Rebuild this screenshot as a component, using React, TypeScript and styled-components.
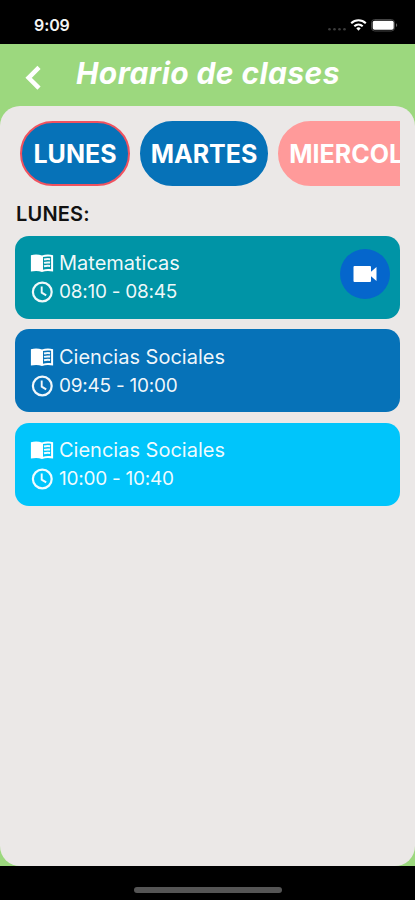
import React from 'react';
import styled, { createGlobalStyle } from 'styled-components';

const GlobalStyle = createGlobalStyle`
  *, *::before, *::after { box-sizing: border-box; }
  body { margin: 0; background: #000; font-family: Inter, 'Liberation Sans', sans-serif; }
`;

const Screen = styled.div`
  display: flex;
  flex-direction: column;
  width: 415px;
  height: 900px;
  overflow: hidden;
  background: #000;
`;

const StatusBar = styled.div`
  display: flex;
  flex: none;
  justify-content: space-between;
  height: 44px;
  padding: 15px 17px 0 34px;
  color: #f4f4f4;
`;

const Clock = styled.span`
  font-size: 16px;
  line-height: 21px;
  font-weight: 600;
  letter-spacing: -0.1px;
`;

const StatusIcons = styled.svg`
  display: block;
  width: 72px;
  height: 20px;
  margin-top: 1px;
`;

const AppBody = styled.div`
  display: flex;
  flex: none;
  flex-direction: column;
  height: 822px;
  background: #9cd87e;
`;

const Header = styled.header`
  display: flex;
  flex: none;
  height: 62px;
  padding-left: 24px;
`;

const BackButton = styled.button`
  display: block;
  width: 20px;
  height: 28px;
  margin: 20px 0 0;
  padding: 0;
  border: 0;
  background: none;
`;

const Title = styled.h1`
  margin: 11px 0 0 32px;
  color: #fff;
  font-size: 30px;
  line-height: 36px;
  font-weight: 700;
  font-style: italic;
  letter-spacing: 0.4px;
  white-space: nowrap;
`;

const Panel = styled.main`
  flex: 1;
  padding: 15px 15px 0;
  border-radius: 20px;
  background: #ebe8e7;
`;

const DayTabs = styled.nav`
  display: flex;
  gap: 10px;
  padding-left: 5px;
  overflow: hidden;
`;

const DayTab = styled.button<{ $color: string; $width: number; $selected?: boolean }>`
  flex: none;
  width: ${({ $width }) => $width}px;
  height: 65px;
  padding: 0;
  border: 2px solid ${({ $selected, $color }) => ($selected ? '#f0525f' : $color)};
  border-radius: 33px;
  background: ${({ $color }) => $color};
  color: #fff;
  font-family: inherit;
  font-size: 25px;
  font-weight: 700;
  line-height: 62px;
  white-space: nowrap;
`;

const DayHeading = styled.h2`
  margin: 15px 0 9px 1px;
  color: #111;
  font-size: 20px;
  line-height: 26px;
  font-weight: 600;
  letter-spacing: 0.2px;
`;

const LessonList = styled.div`
  display: flex;
  flex-direction: column;
  gap: 10.4px;
`;

const LessonCard = styled.article<{ $color: string }>`
  display: flex;
  justify-content: space-between;
  height: 83px;
  padding: 13.2px 10px 0 15px;
  border-radius: 14px;
  background: ${({ $color }) => $color};
  color: rgba(255, 255, 255, 0.94);
`;

const LessonInfo = styled.div`
  display: flex;
  flex-direction: column;
  gap: 1px;
`;

const InfoLine = styled.div<{ $size: number; $spacing: number }>`
  display: flex;
  align-items: center;
  gap: 5px;
  height: 28px;
  font-size: ${({ $size }) => $size}px;
  line-height: 28px;
  letter-spacing: ${({ $spacing }) => $spacing}px;
  white-space: nowrap;
`;

const LineIcon = styled.svg`
  display: block;
  flex: none;
  width: 24px;
  height: 24px;
`;

const CallButton = styled.button`
  display: flex;
  align-items: center;
  justify-content: center;
  width: 50px;
  height: 50px;
  margin: 0;
  padding: 0;
  border: 0;
  border-radius: 50%;
  background: #0566cc;
  color: #fff;
`;

const HomeBar = styled.footer`
  display: flex;
  flex: 1;
  justify-content: center;
  padding-top: 21px;
`;

const HomeIndicator = styled.div`
  width: 148px;
  height: 6px;
  border-radius: 3px;
  background: #555;
`;

const days = [
  { name: 'LUNES', color: '#0672b8', width: 110, selected: true },
  { name: 'MARTES', color: '#0672b8', width: 128 },
  { name: 'MIERCOLES', color: '#ff9a9a', width: 168 },
];

const lessons = [
  { subject: 'Matematicas', time: '08:10 - 08:45', color: '#0094a6', live: true },
  { subject: 'Ciencias Sociales', time: '09:45 - 10:00', color: '#0672b8' },
  { subject: 'Ciencias Sociales', time: '10:00 - 10:40', color: '#00c5fb' },
];

const BookIcon = () => (
  <LineIcon viewBox="0 0 24 24">
    <path
      d="M.9 4.2C4.600 3.300 8.600 3.300 12 4.600c3.400-1.300 7.400-1.300 11.100-.4v16.400c-3.900-.8-7.700-.8-11.100.4-3.400-1.200-7.200-1.200-11.100-.4zM13 6.100v12.600c2.600-.8 5.300-.9 8.100-.5V5.700c-2.800-.5-5.500-.4-8.100.4z"
      fill="#fff"
      fillRule="evenodd"
    />
    <path
      d="M14 8.500c2-.5 4-.6 6.100-.3M14 11.900c2-.5 4-.6 6.100-.3M14 15.300c2-.5 4-.6 6.100-.3"
      fill="none"
      stroke="currentColor"
      strokeWidth="2"
    />
  </LineIcon>
);

const ClockIcon = () => (
  <LineIcon viewBox="0 0 24 24" fill="none" stroke="currentColor">
    <circle cx="12.3" cy="12" r="9.4" strokeWidth="2.2" />
    <path d="M11.7 6.600v6l4.500 2.800" strokeWidth="1.9" />
  </LineIcon>
);

export default function App() {
  return (
    <Screen>
      <GlobalStyle />
      <StatusBar>
        <Clock>9:09</Clock>
        <StatusIcons viewBox="0 0 72 20">
          <g fill="#3c3c3c">
            <circle cx="3.5" cy="13.3" r="1.3" />
            <circle cx="8.5" cy="13.3" r="1.3" />
            <circle cx="13.5" cy="13.3" r="1.3" />
            <circle cx="18.5" cy="13.3" r="1.3" />
          </g>
          <g fill="none" stroke="#fff" strokeWidth="2.1">
            <path d="M25.2 7.2a10.6 10.6 0 0 1 14.6 0" />
            <path d="M28.3 10.3a6.2 6.2 0 0 1 8.4 0" />
          </g>
          <path d="M30.3 12.2a3.6 3.6 0 0 1 4.4 0l-2.2 2.6z" fill="#fff" />
          <rect x="45.5" y="3.5" width="23" height="11.5" rx="3.2" fill="none" stroke="#444" />
          <rect x="46.7" y="4.7" width="21" height="9" rx="1.8" fill="#fff" />
          <path d="M70 7.3c1.6.7 1.6 3.1 0 3.8z" fill="#666" />
        </StatusIcons>
      </StatusBar>
      <AppBody>
        <Header>
          <BackButton aria-label="Volver">
            <svg width="20" height="28" viewBox="0 0 20 28">
              <path d="M15 3.400 4.600 13.800 15 24.200" fill="none" stroke="#fff" strokeWidth="4.5" />
            </svg>
          </BackButton>
          <Title>Horario de clases</Title>
        </Header>
        <Panel>
          <DayTabs>
            {days.map((day) => (
              <DayTab key={day.name} $color={day.color} $width={day.width} $selected={day.selected}>
                {day.name}
              </DayTab>
            ))}
          </DayTabs>
          <DayHeading>LUNES:</DayHeading>
          <LessonList>
            {lessons.map((lesson) => (
              <LessonCard key={lesson.time} $color={lesson.color}>
                <LessonInfo>
                  <InfoLine $size={20} $spacing={0}>
                    <BookIcon />
                    {lesson.subject}
                  </InfoLine>
                  <InfoLine $size={19} $spacing={-0.25}>
                    <ClockIcon />
                    {lesson.time}
                  </InfoLine>
                </LessonInfo>
                {lesson.live && (
                  <CallButton aria-label="Videollamada">
                    <svg width="24" height="18" viewBox="0 0 24 18">
                      <path
                        d="M1.500 1H17a1 1 0 0 1 1 1v4.800L23.500 2v14L18 11.200V16a1 1 0 0 1-1 1H1.500a1 1 0 0 1-1-1V2a1 1 0 0 1 1-1z"
                        fill="currentColor"
                      />
                    </svg>
                  </CallButton>
                )}
              </LessonCard>
            ))}
          </LessonList>
        </Panel>
      </AppBody>
      <HomeBar>
        <HomeIndicator />
      </HomeBar>
    </Screen>
  );
}
